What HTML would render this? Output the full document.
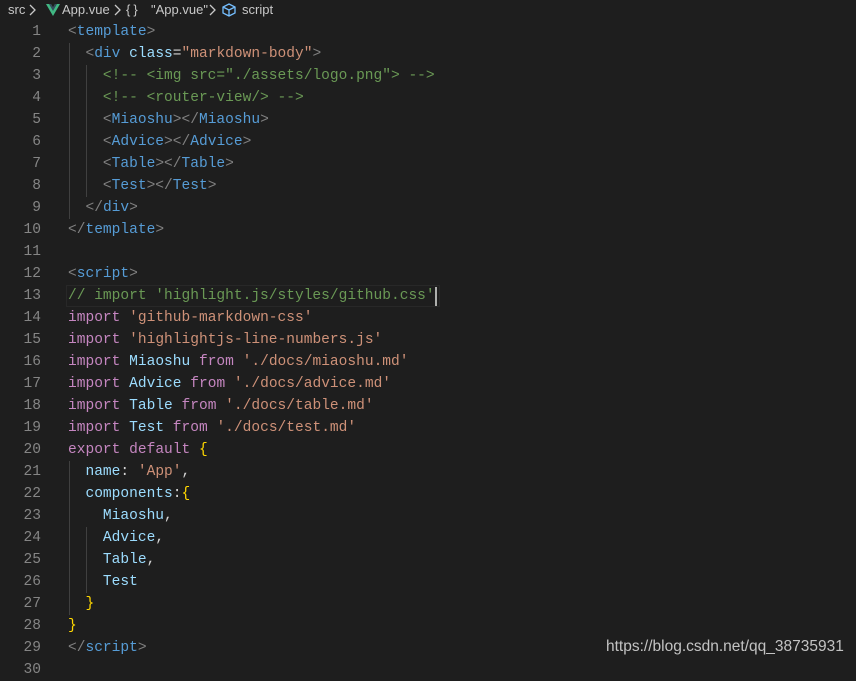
<!DOCTYPE html>
<html><head><meta charset="utf-8"><style>
html,body{margin:0;padding:0;background:#1e1e1e;width:856px;height:667px;overflow:hidden}
.bc{position:absolute;top:0;height:20px;font:13px "Liberation Sans",sans-serif;color:#c8c8c8;white-space:nowrap;line-height:20px}
.code{position:absolute;left:0;top:21px;font:14.55px/22px "Liberation Mono",monospace;white-space:pre}
.ln{position:absolute;left:0;width:41px;text-align:right;color:#858585}
.tx{position:absolute;left:68px;color:#d4d4d4}
.g{position:absolute;width:1px;background:#404040}
.d{color:#808080}.t{color:#569cd6}.a{color:#9cdcfe}.s{color:#ce9178}.c{color:#6a9955}.k{color:#c586c0}.v{color:#9cdcfe}.b{color:#ffd700}
.cur{position:absolute;left:66px;top:285px;width:372px;height:20px;border:1px solid #282828}
.caret{position:absolute;left:435px;top:287px;width:2px;height:19px;background:#aeafad}
.wm{position:absolute;left:606px;top:638px;font:15.5px "Liberation Sans",sans-serif;color:#c3c3c3}
</style></head><body>
<div class="bc" style="left:8px">src</div>
<svg style="position:absolute;left:28px;top:4px" width="10" height="12"><path d="M2 1 L7 6 L2 11" fill="none" stroke="#c8c8c8" stroke-width="1.3"/></svg>
<svg style="position:absolute;left:46px;top:4px" width="14" height="12"><path d="M0 0 L5 0 L7 3.5 L9 0 L14 0 L7 12 Z" fill="#41b883"/><path d="M3 0 L5 0 L7 3.5 L9 0 L11 0 L7 7 Z" fill="#35495e"/></svg>
<div class="bc" style="left:62px">App.vue</div>
<svg style="position:absolute;left:113px;top:4px" width="10" height="12"><path d="M2 1 L7 6 L2 11" fill="none" stroke="#c8c8c8" stroke-width="1.3"/></svg>
<div class="bc" style="left:126px;letter-spacing:3px">{}</div>
<div class="bc" style="left:151px">"App.vue"</div>
<svg style="position:absolute;left:208px;top:4px" width="10" height="12"><path d="M2 1 L7 6 L2 11" fill="none" stroke="#c8c8c8" stroke-width="1.3"/></svg>
<svg style="position:absolute;left:221px;top:2px" width="16" height="16" viewBox="0 0 16 16"><path d="M8 2 L14 5 L14 11 L8 14 L2 11 L2 5 Z M2 5 L8 8 L14 5 M8 8 L8 14" fill="none" stroke="#75beff" stroke-width="1.3"/></svg>
<div class="bc" style="left:242px">script</div>
<div class="cur"></div><div class="caret"></div>
<div class="g" style="left:69px;top:43px;height:176px"></div>
<div class="g" style="left:86px;top:65px;height:132px"></div>
<div class="g" style="left:69px;top:461px;height:154px"></div>
<div class="g" style="left:86px;top:527px;height:66px"></div>
<div class="code" id="c"></div>
<div class="wm">https://blog.csdn.net/qq_38735931</div>
<script>
var L=[
'<span class="d">&lt;</span><span class="t">template</span><span class="d">&gt;</span>',
'  <span class="d">&lt;</span><span class="t">div</span> <span class="a">class</span>=<span class="s">"markdown-body"</span><span class="d">&gt;</span>',
'    <span class="c">&lt;!-- &lt;img src="./assets/logo.png"&gt; --&gt;</span>',
'    <span class="c">&lt;!-- &lt;router-view/&gt; --&gt;</span>',
'    <span class="d">&lt;</span><span class="t">Miaoshu</span><span class="d">&gt;&lt;/</span><span class="t">Miaoshu</span><span class="d">&gt;</span>',
'    <span class="d">&lt;</span><span class="t">Advice</span><span class="d">&gt;&lt;/</span><span class="t">Advice</span><span class="d">&gt;</span>',
'    <span class="d">&lt;</span><span class="t">Table</span><span class="d">&gt;&lt;/</span><span class="t">Table</span><span class="d">&gt;</span>',
'    <span class="d">&lt;</span><span class="t">Test</span><span class="d">&gt;&lt;/</span><span class="t">Test</span><span class="d">&gt;</span>',
'  <span class="d">&lt;/</span><span class="t">div</span><span class="d">&gt;</span>',
'<span class="d">&lt;/</span><span class="t">template</span><span class="d">&gt;</span>',
'',
'<span class="d">&lt;</span><span class="t">script</span><span class="d">&gt;</span>',
'<span class="c">// import \'highlight.js/styles/github.css\'</span>',
'<span class="k">import</span> <span class="s">\'github-markdown-css\'</span>',
'<span class="k">import</span> <span class="s">\'highlightjs-line-numbers.js\'</span>',
'<span class="k">import</span> <span class="v">Miaoshu</span> <span class="k">from</span> <span class="s">\'./docs/miaoshu.md\'</span>',
'<span class="k">import</span> <span class="v">Advice</span> <span class="k">from</span> <span class="s">\'./docs/advice.md\'</span>',
'<span class="k">import</span> <span class="v">Table</span> <span class="k">from</span> <span class="s">\'./docs/table.md\'</span>',
'<span class="k">import</span> <span class="v">Test</span> <span class="k">from</span> <span class="s">\'./docs/test.md\'</span>',
'<span class="k">export</span> <span class="k">default</span> <span class="b">{</span>',
'  <span class="v">name</span>: <span class="s">\'App\'</span>,',
'  <span class="v">components</span>:<span class="b">{</span>',
'    <span class="v">Miaoshu</span>,',
'    <span class="v">Advice</span>,',
'    <span class="v">Table</span>,',
'    <span class="v">Test</span>',
'  <span class="b">}</span>',
'<span class="b">}</span>',
'<span class="d">&lt;/</span><span class="t">script</span><span class="d">&gt;</span>',
''];
var h='';
for(var i=0;i<L.length;i++){h+='<div class="ln" style="top:'+(i*22)+'px">'+(i+1)+'</div><div class="tx" style="top:'+(i*22)+'px">'+L[i]+'</div>';}
document.getElementById('c').innerHTML=h;
</script>
</body></html>
